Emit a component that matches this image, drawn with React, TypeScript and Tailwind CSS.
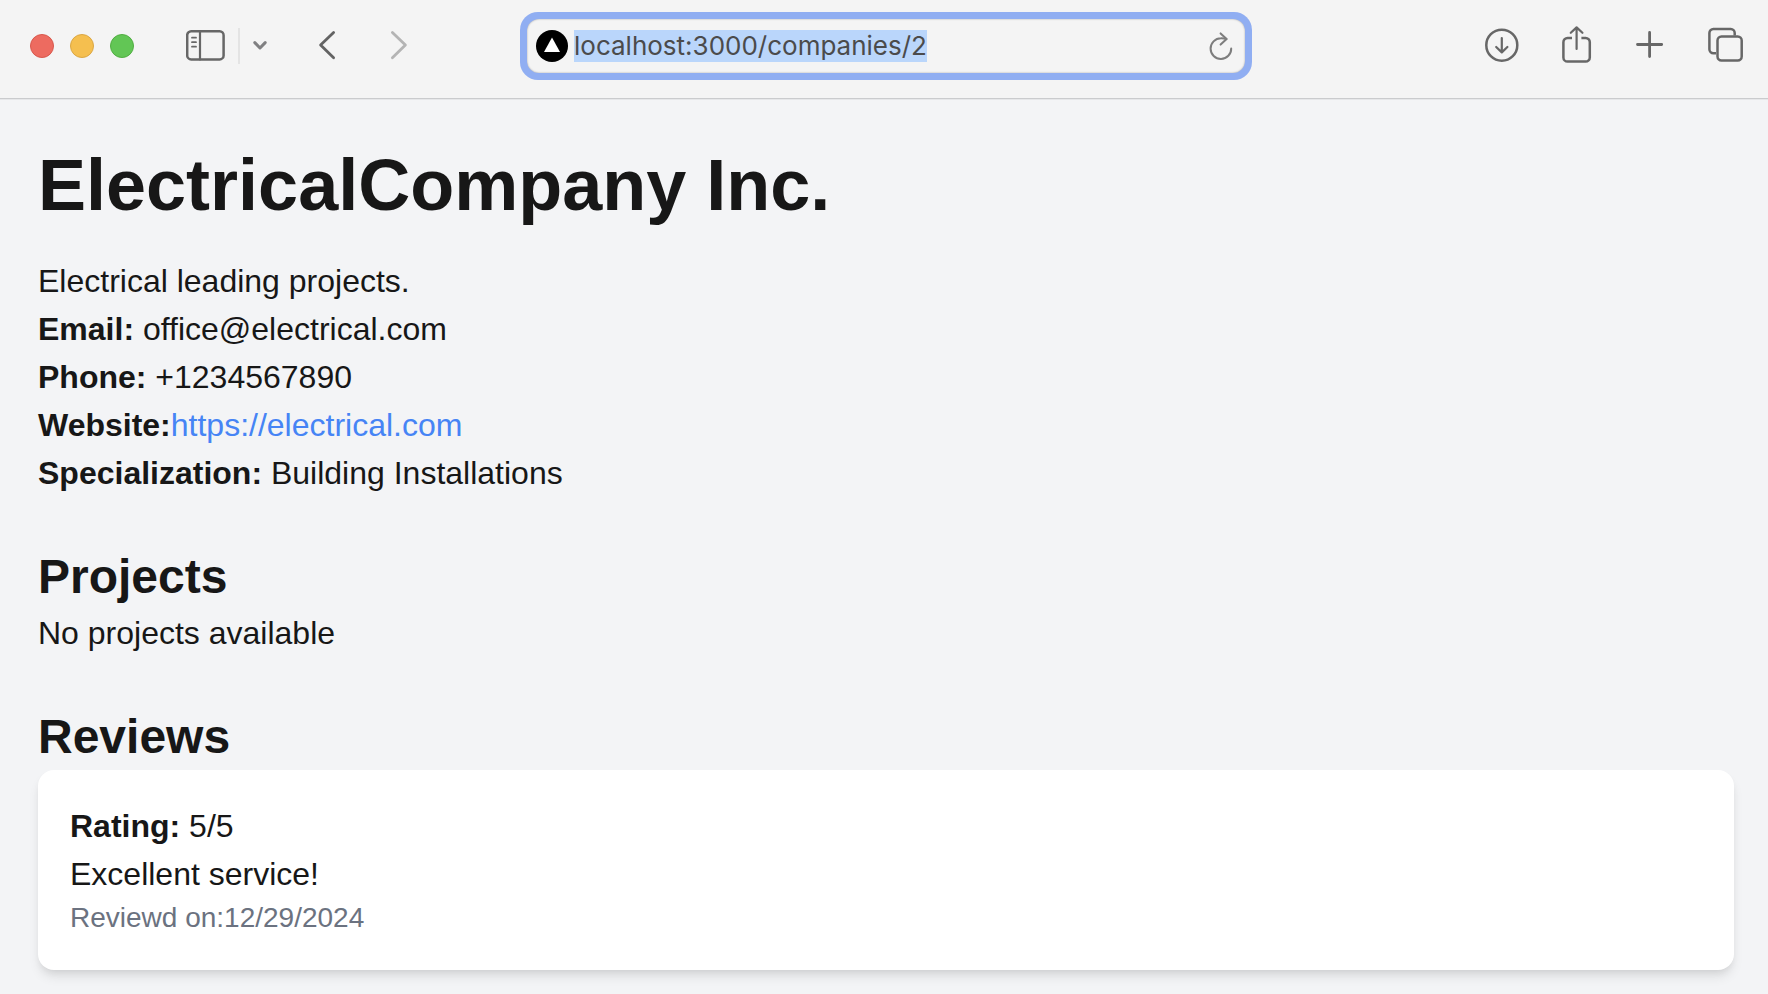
import { useEffect, useRef } from "react";
import type { ReactNode } from "react";

type IconButtonProps = {
  label: string;
  width: number;
  className?: string;
  disabled?: boolean;
  children: ReactNode;
};

function IconButton({ label, width, className, disabled, children }: IconButtonProps) {
  return (
    <button type="button" aria-label={label} disabled={disabled} className={className}>
      <svg
        width={width}
        height="40"
        viewBox={`0 0 ${width} 40`}
        fill="none"
        stroke="currentColor"
        strokeWidth="2.5"
        strokeLinecap="round"
        strokeLinejoin="round"
        aria-hidden="true"
      >
        {children}
      </svg>
    </button>
  );
}

function AddressBar() {
  const input = useRef<HTMLInputElement>(null);

  useEffect(() => {
    input.current?.focus();
    input.current?.select();
  }, []);

  return (
    <div className="flex h-17 items-center rounded-[18px] bg-[#90aef2] p-[7px]">
      <div className="flex h-full w-full items-center rounded-xl bg-[#f4f4f4] pr-3 pl-[9px] shadow-[inset_0_0_2px_rgba(0,0,0,0.35)]">
        <svg width="32" height="32" viewBox="0 0 32 32" className="shrink-0" aria-hidden="true">
          <circle cx="16" cy="16" r="16" fill="#000" />
          <path d="M16 7.5 24 22H8Z" fill="#fff" />
        </svg>
        <input
          ref={input}
          type="text"
          aria-label="Address"
          defaultValue="localhost:3000/companies/2"
          spellCheck={false}
          className="ml-1.5 h-8 min-w-0 flex-1 bg-transparent font-[Inter,sans-serif] text-[26px] leading-8 text-[#4b4b4b] outline-none selection:bg-[#bad6fb] selection:text-[#4b4b4b]"
        />
        <IconButton label="Reload" width={24} className="text-[#7d7d7d]">
          <g strokeWidth="2">
            <path d="M22.2 22.4A10.3 10.3 0 1 1 11.9 12.3Q14.6 12.2 17.4 13" />
            <path d="M11.6 7.4 17.6 13 11.6 18.6" />
          </g>
        </IconButton>
      </div>
    </div>
  );
}

function Toolbar() {
  return (
    <header className="grid grid-cols-[1fr_732px_1fr] items-center border-b border-[#cacbcd] bg-[#f4f4f4] pt-3 pb-[18px] pl-1 shadow-[0_1px_0_#e6e7e9]">
      <div className="flex items-center pl-[26px]">
        <div className="flex gap-4">
          <button type="button" aria-label="Close" className="size-6 rounded-full border border-[#d8584d] bg-[#ed6b60]" />
          <button type="button" aria-label="Minimize" className="size-6 rounded-full border border-[#dba744] bg-[#f5bf4f]" />
          <button type="button" aria-label="Zoom" className="size-6 rounded-full border border-[#51ae42] bg-[#62c655]" />
        </div>
        <IconButton label="Show sidebar" width={40} className="ml-13 text-[#676767]">
          <rect x="1.2" y="5.2" width="36.4" height="28.2" rx="4" />
          <path d="M14 5.2V33.4" strokeWidth="2.2" />
          <path d="M6 11.7H10M6 16.2H10M6 20.7H10" strokeWidth="1.8" />
        </IconButton>
        <div className="ml-3 h-9 w-0.5 bg-[#e4e4e4]" />
        <IconButton label="Sidebar options" width={16} className="ml-3 text-[#808082]">
          <path d="M2.8 16.6 8 22 13.2 16.6" strokeWidth="3" />
        </IconButton>
        <IconButton label="Back" width={18} className="ml-[50px] text-[#636363]">
          <path d="M15.6 6.4 2.6 19 15.6 31.8" strokeWidth="2.8" />
        </IconButton>
        <IconButton label="Forward" width={18} disabled className="ml-[54px] text-[#b4b4b4]">
          <path d="M2.4 6.4 15.4 19 2.4 31.8" strokeWidth="2.8" />
        </IconButton>
      </div>
      <AddressBar />
      <div className="flex items-center justify-end pr-6 text-[#676767]">
        <IconButton label="Downloads" width={34}>
          <circle cx="16.8" cy="19.2" r="15.5" />
          <path d="M16.8 12V26M11.2 21 16.8 26.4 22.4 21" strokeWidth="2.2" />
        </IconButton>
        <IconButton label="Share" width={30} className="ml-[43px]">
          <path d="M10 12H5.6A4.2 4.2 0 0 0 1.4 16.2V31.4A4.2 4.2 0 0 0 5.6 35.6H23.6A4.2 4.2 0 0 0 27.8 31.4V16.2A4.2 4.2 0 0 0 23.6 12H19.4" strokeLinecap="butt" />
          <path d="M14.6 23V1.6M8.8 6.8 14.6 1.4 20.4 6.8" strokeWidth="2.2" />
        </IconButton>
        <IconButton label="New tab" width={28} className="ml-[44px]">
          <path d="M13.6 6.4V30.6M1.5 18.5H25.7" strokeWidth="2.8" />
        </IconButton>
        <IconButton label="Tab overview" width={36} className="ml-[44px]">
          <path d="M8 27.2H5.4A4 4 0 0 1 1.4 23.2V6.9A4 4 0 0 1 5.4 2.9H22.7A4 4 0 0 1 26.7 6.9V9.4" strokeLinecap="butt" />
          <rect x="9.5" y="10.4" width="24.2" height="24.2" rx="4" />
        </IconButton>
      </div>
    </header>
  );
}

export default function App() {
  return (
    <div className="flex min-h-screen flex-col bg-[#f3f4f6] font-['Liberation_Sans',Arial,sans-serif] text-[32px] leading-12 text-[#171717]">
      <Toolbar />
      <main className="pt-[46px] pr-[34px] pb-6 pl-[38px]">
        <h1 className="mb-8 text-7xl leading-20 font-bold">ElectricalCompany Inc.</h1>
        <p>Electrical leading projects.</p>
        <p>
          <strong>Email:</strong> office@electrical.com
        </p>
        <p>
          <strong>Phone:</strong> +1234567890
        </p>
        <p>
          <strong>Website:</strong>
          <a href="https://electrical.com" className="text-[#4684f5]">
            https://electrical.com
          </a>
        </p>
        <p>
          <strong>Specialization:</strong> Building Installations
        </p>

        <section className="mt-12">
          <h2 className="text-5xl leading-16 font-bold">Projects</h2>
          <p>No projects available</p>
        </section>

        <section className="mt-12">
          <h2 className="mb-px text-5xl leading-16 font-bold">Reviews</h2>
          <article className="rounded-2xl bg-white p-8 shadow-[0_8px_12px_-2px_rgba(0,0,0,0.1),0_4px_8px_-4px_rgba(0,0,0,0.1)]">
            <p>
              <strong>Rating:</strong> 5/5
            </p>
            <p>Excellent service!</p>
            <p className="text-[28px] leading-10 text-[#6b7280]">Reviewd on:12/29/2024</p>
          </article>
        </section>
      </main>
    </div>
  );
}
